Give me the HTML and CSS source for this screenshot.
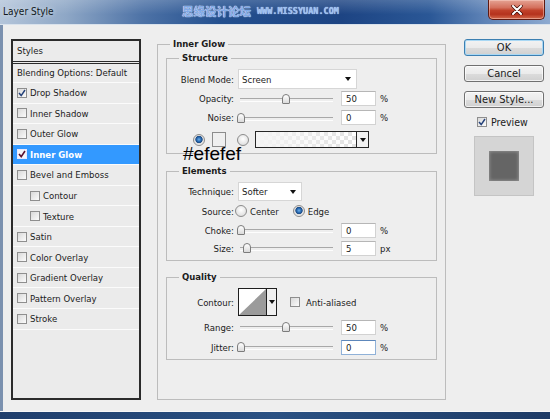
FILE: index.html
```html
<!DOCTYPE html>
<html>
<head>
<meta charset="utf-8">
<title>Layer Style</title>
<link rel="stylesheet" href="styles.css">
</head>
<body>
<div class="window">
  <div class="titlebar">
    <div class="title">Layer Style</div>
    <div class="watermark"><span class="wm-cn">思缘设计论坛</span><span class="wm-en">WWW.MISSYUAN.COM</span></div>
    <div class="close"><svg width="12" height="10" viewBox="0 0 12 10"><path d="M2 1 L10 9 M10 1 L2 9" stroke="#3a0a04" stroke-width="3.4" stroke-linecap="round"/><path d="M2 1 L10 9 M10 1 L2 9" stroke="#fff" stroke-width="2" stroke-linecap="round"/></svg></div>
  </div>
  <div class="content">
    <div class="styles-list">
      <div class="list-head">Styles</div>
      <div class="list-blend">Blending Options: Default</div>
      <div class="item"><span class="cb"><svg width="8" height="8" viewBox="0 0 8 8"><path d="M1 4 L3.2 6.6 L7 1" fill="none" stroke="#24417a" stroke-width="1.5"/></svg></span>Drop Shadow</div>
      <div class="item"><span class="cb"></span>Inner Shadow</div>
      <div class="item"><span class="cb"></span>Outer Glow</div>
      <div class="item selected"><span class="cb"><svg width="8" height="8" viewBox="0 0 8 8"><path d="M1 4 L3.2 6.6 L7 1" fill="none" stroke="#5a1030" stroke-width="1.6"/></svg></span>Inner Glow</div>
      <div class="item"><span class="cb"></span>Bevel and Emboss</div>
      <div class="item sub"><span class="cb"></span>Contour</div>
      <div class="item sub"><span class="cb"></span>Texture</div>
      <div class="item"><span class="cb"></span>Satin</div>
      <div class="item"><span class="cb"></span>Color Overlay</div>
      <div class="item"><span class="cb"></span>Gradient Overlay</div>
      <div class="item"><span class="cb"></span>Pattern Overlay</div>
      <div class="item"><span class="cb"></span>Stroke</div>
    </div>

    <div class="main">
      <fieldset class="group outer">
        <legend>Inner Glow</legend>

        <fieldset class="group structure">
          <legend>Structure</legend>
          <div class="row r-20">
            <span class="lbl">Blend Mode:</span>
            <div class="sel sel-blend"><span>Screen</span><i class="arrow"></i></div>
          </div>
          <div class="row r-19">
            <span class="lbl">Opacity:</span>
            <div class="slider"><i class="thumb" style="left:44px"></i></div>
            <span class="num">50</span><span class="unit">%</span>
          </div>
          <div class="row r-19">
            <span class="lbl">Noise:</span>
            <div class="slider"><i class="thumb" style="left:-1px"></i></div>
            <span class="num">0</span><span class="unit">%</span>
          </div>
          <div class="row r-19 color-row">
            <span class="rb on"></span>
            <span class="swatch"></span>
            <span class="rb"></span>
            <div class="grad"><div class="grad-fill"></div><div class="grad-drop"><i class="arrow"></i></div></div>
          </div>
        </fieldset>

        <fieldset class="group elements">
          <legend>Elements</legend>
          <div class="row r-19">
            <span class="lbl">Technique:</span>
            <div class="sel sel-tech"><span>Softer</span><i class="arrow"></i></div>
          </div>
          <div class="row r-20">
            <span class="lbl lbl-src">Source:</span>
            <span class="rb"></span><span class="opt">Center</span>
            <span class="rb on rb-edge"></span><span class="opt">Edge</span>
          </div>
          <div class="row r-18">
            <span class="lbl">Choke:</span>
            <div class="slider"><i class="thumb" style="left:-1px"></i></div>
            <span class="num">0</span><span class="unit">%</span>
          </div>
          <div class="row r-18">
            <span class="lbl">Size:</span>
            <div class="slider"><i class="thumb" style="left:5px"></i></div>
            <span class="num">5</span><span class="unit">px</span>
          </div>
        </fieldset>

        <fieldset class="group quality">
          <legend>Quality</legend>
          <div class="row r-28">
            <span class="lbl lbl-contour">Contour:</span>
            <div class="contour">
              <div class="contour-graph"><svg width="27" height="26" viewBox="0 0 27 26"><polygon points="0,26 27,0 27,26" fill="#9b9b9b"/></svg></div>
              <div class="contour-drop"><i class="arrow"></i></div>
            </div>
            <span class="cb cb-aa"></span><span class="opt">Anti-aliased</span>
          </div>
          <div class="row r-20 range-row">
            <span class="lbl">Range:</span>
            <div class="slider"><i class="thumb" style="left:44px"></i></div>
            <span class="num">50</span><span class="unit">%</span>
          </div>
          <div class="row r-20">
            <span class="lbl">Jitter:</span>
            <div class="slider"><i class="thumb" style="left:-1px"></i></div>
            <span class="num focus">0</span><span class="unit">%</span>
          </div>
        </fieldset>
      </fieldset>
      <div class="note">#efefef</div>
    </div>

    <div class="side">
      <div class="btn default">OK</div>
      <div class="btn">Cancel</div>
      <div class="btn">New Style...</div>
      <div class="preview-check"><span class="cb"><svg width="8" height="8" viewBox="0 0 8 8"><path d="M1 4 L3.2 6.6 L7 1" fill="none" stroke="#24417a" stroke-width="1.5"/></svg></span>Preview</div>
      <div class="preview"><div class="preview-sq"></div></div>
    </div>
  </div>
  <div class="bottom-frame"></div>
</div>
</body>
</html>
```

FILE: styles.css
```css
* { box-sizing: border-box; }
html, body { margin: 0; padding: 0; }
body {
  width: 550px;
  height: 419px;
  overflow: hidden;
  background: #eeeeee;
  font-family: "DejaVu Sans Condensed", "DejaVu Sans", sans-serif;
  font-size: 9.5px;
  color: #1b1b1b;
}
.window {
  width: 550px;
  height: 419px;
  display: flex;
  flex-direction: column;
}

/* title bar */
.titlebar {
  height: 25px;
  flex: none;
  display: flex;
  align-items: flex-start;
  border-bottom: 1px solid #d9e2ec;
  background:
    linear-gradient(to bottom, rgba(255,255,255,0.18), rgba(255,255,255,0) 60%),
    linear-gradient(to right, #b4c5da 0%, #8ea7c6 12%, #4d72a6 26%, #24508f 40%, #1d4483 62%, #2a5796 78%, #5d82b6 88%, #8eaad0 100%);
}
.title {
  width: 179px;
  margin: 6px 0 0 3px;
  font-size: 10px;
  line-height: 12px;
  color: #101820;
  text-shadow: 0 0 5px rgba(255,255,255,0.7);
}
.watermark {
  margin-top: 4px;
  display: flex;
  align-items: center;
  gap: 6px;
  height: 14px;
}
.wm-cn {
  font-family: "Noto Sans CJK SC", sans-serif;
  font-weight: bold;
  font-size: 11.5px;
  line-height: 14px;
  color: #7fa8e6;
  text-shadow: 0 0 1px #e8f0ff, 0 0 1px #e8f0ff;
}
.wm-en {
  font-family: "DejaVu Sans Mono", monospace;
  font-weight: bold;
  font-size: 8.5px;
  line-height: 10px;
  color: #9cc0f2;
  text-shadow: 0 0 1px #e0ecff;
}
.close {
  margin-left: auto;
  margin-right: 5px;
  width: 57px;
  height: 20px;
  border: 1px solid #5e1a12;
  border-top: none;
  border-radius: 0 0 5px 5px;
  background: linear-gradient(to bottom, #e5a394 0%, #d4705d 40%, #c0412a 55%, #b5321d 75%, #d46a4c 100%);
  box-shadow: inset 0 0 0 1px rgba(255,220,210,0.45);
  display: flex;
  align-items: center;
  justify-content: center;
}

/* content */
.content {
  height: 386px;
  flex: none;
  display: flex;
  align-items: flex-start;
  border-left: 3px solid #7b91af;
  background: #eeeeee;
}
.bottom-frame {
  flex: none;
  height: 8px;
  border-top: 1px solid #f7f7f7;
  background: linear-gradient(to right, #1f3e6c, #2a5183 50%, #1e3b66);
}

/* styles list */
.styles-list {
  margin: 14px 0 0 8px;
  width: 130px;
  height: 361px;
  border: 2px solid #2b2b2b;
  background: #ebebeb;
  flex: none;
}
.list-head {
  height: 23px;
  padding-left: 4px;
  line-height: 20px;
  border-bottom: 3px double #2b2b2b;
}
.list-blend {
  height: 19px;
  padding-left: 4px;
  line-height: 18px;
  border-bottom: 1px solid #fbfbfb;
}
.item {
  height: 20.55px;
  display: flex;
  align-items: center;
  padding-left: 4px;
  border-bottom: 1px solid #fbfbfb;
}
.item.sub { padding-left: 17px; }
.item.selected {
  background: #3399ff;
  color: #fff;
  font-weight: bold;
}
.cb {
  width: 10px;
  height: 10px;
  flex: none;
  margin-right: 3px;
  border: 1px solid #8e8e8e;
  background: linear-gradient(135deg, #d9d9d9, #fbfbfb);
  display: flex;
  align-items: center;
  justify-content: center;
}
.item.selected .cb { border-color: #e8e8ff; background: #f4f4f8; }

/* main panel */
.main {
  position: relative;
  margin: 13px 0 0 16px;
  width: 289px;
  flex: none;
}
.group {
  margin: 0;
  padding: 0;
  min-width: 0;
  border: 1px solid #bcbcbc;
}
.group > legend {
  margin-left: 12px;
  padding: 0 3px;
  font-weight: bold;
  line-height: 12px;
}
.outer { height: 362px; }
.structure { margin: 2px 8px 0; padding: 5px 0 4px; }
.elements { margin: 11px 8px 0; padding: 5px 0 3px; }
.quality { margin: 10px 8px 0; padding: 5px 0 2px; }

.row { display: flex; align-items: center; }
.r-18 { height: 18px; }
.r-19 { height: 19px; }
.r-20 { height: 20px; }
.r-28 { height: 28px; }
.color-row { margin-top: 3px; padding-left: 26px; }
.range-row { margin-top: 1px; }
.lbl {
  width: 67px;
  margin-right: 4px;
  text-align: right;
  flex: none;
}
.lbl-src { margin-right: 1px; }

.sel {
  height: 100%;
  display: flex;
  align-items: center;
  justify-content: space-between;
  padding: 0 5px 0 3px;
  background: #fff;
  border: 1px solid #d6d6d6;
}
.sel-blend { width: 119px; }
.sel-tech { width: 64px; }
.arrow {
  display: block;
  width: 0;
  height: 0;
  border-left: 3.5px solid transparent;
  border-right: 3.5px solid transparent;
  border-top: 4px solid #111;
}

.slider {
  position: relative;
  width: 97px;
  height: 100%;
  margin-right: 6px;
  flex: none;
}
.slider::before {
  content: "";
  position: absolute;
  left: 2px;
  right: 2px;
  top: calc(50% - 1px);
  height: 2px;
  border-top: 1px solid #a8a8a8;
  border-bottom: 1px solid #fdfdfd;
}
.thumb {
  position: absolute;
  top: calc(50% - 5px);
  width: 8px;
  height: 10px;
  border: 1px solid #7c7c7c;
  border-radius: 4px 4px 1px 1px;
  background: linear-gradient(#ffffff, #dadada);
}
.num {
  width: 35px;
  height: 15px;
  flex: none;
  padding-left: 4px;
  line-height: 13px;
  background: #fff;
  border: 1px solid #d2d2d2;
  border-top-color: #b6b6b6;
}
.num.focus { border-color: #8fb1d8; border-top-color: #5d87bb; }
.unit { margin-left: 4px; }

.rb {
  width: 12px;
  height: 12px;
  flex: none;
  border-radius: 50%;
  border: 1px solid #8c8c8c;
  background: radial-gradient(circle at 50% 40%, #ffffff, #d6d6d6);
}
.rb.on {
  background: radial-gradient(circle at 50% 45%, #6fb0ea 0, #2d6fb6 2px, #1a4a85 3.3px, #dcdcdc 4px, #f7f7f7 6px);
}
.opt { margin-left: 3px; }
.rb-edge { margin-left: 14px; }
.swatch {
  width: 14px;
  height: 15px;
  flex: none;
  margin: 0 11px 0 7px;
  background: #efefef;
  border: 1px solid #8c8c8c;
}
.grad {
  margin-left: 6px;
  width: 114px;
  height: 17px;
  display: flex;
  border: 1px solid #262626;
  flex: none;
}
.grad-fill {
  flex: 1;
  background-color: #fff;
  background-image:
    linear-gradient(to right, #f4f4f4 0%, rgba(244,244,244,0) 100%),
    conic-gradient(#e2e2e2 25%, #fff 0 50%, #e2e2e2 0 75%, #fff 0);
  background-size: auto, 8px 8px;
}
.grad-drop {
  width: 12px;
  border-left: 1px solid #262626;
  background: #f2f2f2;
  display: flex;
  align-items: center;
  justify-content: center;
}

.lbl-contour { margin-right: 4px; }
.contour {
  width: 39px;
  height: 28px;
  display: flex;
  border: 1px solid #1e1e1e;
  background: #fff;
  flex: none;
}
.contour-graph { flex: 1; display: flex; }
.contour-drop {
  width: 11px;
  border-left: 1px solid #1e1e1e;
  background: #f0f0f0;
  display: flex;
  align-items: center;
  justify-content: center;
}
.cb-aa { margin-left: 13px; }

.note {
  position: absolute;
  left: 26px;
  top: 106px;
  font-family: "Liberation Sans", Arial, sans-serif;
  font-size: 19px;
  line-height: 19px;
  color: #000;
}

/* side column */
.side {
  margin: 14px 0 0 18px;
  width: 80px;
  flex: none;
}
.btn {
  height: 17px;
  margin-bottom: 9px;
  border: 1px solid #707070;
  border-radius: 3px;
  background: linear-gradient(#f3f3f3 0%, #ebebeb 50%, #dcdcdc 51%, #d0d0d0 100%);
  box-shadow: inset 0 0 0 1px rgba(255,255,255,0.7);
  text-align: center;
  font-size: 11px;
  line-height: 15px;
}
.btn.default {
  border-color: #3c7fb1;
  box-shadow: inset 0 0 0 1px #a9d8f4;
}
.preview-check {
  height: 18px;
  margin-top: -4px;
  padding-left: 13px;
  display: flex;
  align-items: center;
  font-size: 10.5px;
}
.preview-check .cb { margin-right: 4px; }
.preview {
  width: 60px;
  height: 60px;
  margin: 5px 0 0 10px;
  background: #d5d5d5;
  border: 1px solid #c4c4c4;
  display: flex;
  align-items: center;
  justify-content: center;
}
.preview-sq {
  width: 30px;
  height: 30px;
  background: #656565;
  box-shadow: inset 0 0 3px 1px #8c8c8c;
  filter: blur(0.6px);
}
```
